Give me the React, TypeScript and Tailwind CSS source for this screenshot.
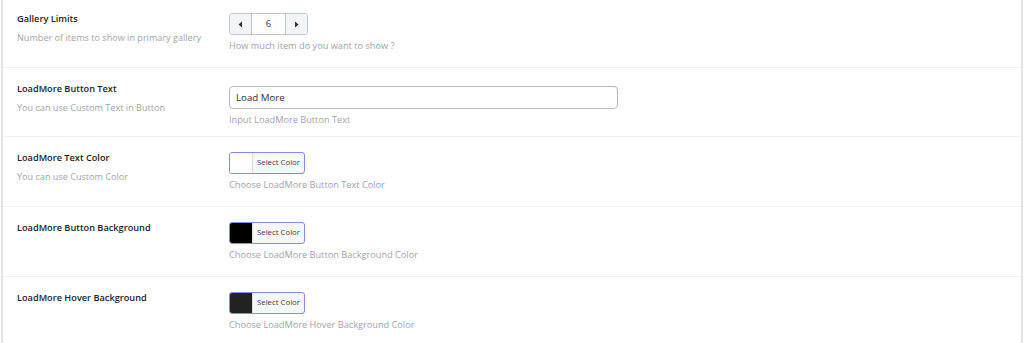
import React, { useState } from 'react';

interface SettingRowProps {
    label: string;
    description?: string;
    help: string;
    children: React.ReactNode;
    heightClass: string;
    first?: boolean;
    last?: boolean;
}

const SettingRow: React.FC<SettingRowProps> = ({ label, description, help, children, heightClass, first, last }) => {
    return (
        <div className={`flex ${heightClass} ${first ? 'pt-0' : 'pt-[2px]'} ${last ? '' : 'border-b border-[#f0f0f1]'}`}>
            <div className="w-[212px] shrink-0 pl-[14px] pt-[12px]">
                <div className="text-[9.2px] font-semibold leading-[14px] text-[#1d2327]">{label}</div>
                {description && (
                    <div className="mt-[5px] text-[9.1px] leading-[14px] text-[#a0a5aa]">{description}</div>
                )}
            </div>
            <div className="pl-[14px] pt-[13px]">
                {children}
                <div className="mt-[4px] text-[9.2px] leading-[14px] text-[#a0a5aa]">{help}</div>
            </div>
        </div>
    );
};

const ColorPicker: React.FC<{ color: string }> = ({ color }) => (
    <button
        type="button"
        className="flex h-[22px] w-[76px] items-stretch overflow-hidden rounded-[3px] border border-[#7f8cf5] bg-[#f6f7f7]"
    >
        <span className="w-[23px] border-r border-[#dcdcde]" style={{ backgroundColor: color }} />
        <span className="flex flex-1 items-center justify-center text-[7.8px] text-[#3c434a]">Select Color</span>
    </button>
);

const Stepper: React.FC = () => {
    const [value, setValue] = useState(6);
    return (
        <div className="flex h-[22px] w-[79px] overflow-hidden rounded-[3px] border border-[#c3c4c7] bg-white">
            <button
                type="button"
                onClick={() => setValue(v => Math.max(0, v - 1))}
                className="flex w-[22px] items-center justify-center border-r border-[#c3c4c7] bg-[#f3f4f5]"
            >
                <svg width="5" height="7" viewBox="0 0 5 7"><path d="M4 0.5 L0.5 3.5 L4 6.5 Z" fill="#2c3338" /></svg>
            </button>
            <div className="flex flex-1 items-center justify-center text-[9.5px] text-[#3c434a]">{value}</div>
            <button
                type="button"
                onClick={() => setValue(v => v + 1)}
                className="flex w-[22px] items-center justify-center border-l border-[#c3c4c7] bg-[#f3f4f5]"
            >
                <svg width="5" height="7" viewBox="0 0 5 7"><path d="M1 0.5 L4.5 3.5 L1 6.5 Z" fill="#2c3338" /></svg>
            </button>
        </div>
    );
};

export default function App() {
    const [buttonText, setButtonText] = useState('Load More');

    return (
        <div className="h-[343px] w-[1024px] overflow-hidden bg-white font-['Open_Sans',sans-serif]">
            <div className="mx-[1px] h-full border-x-2 border-[#e4e4e4]">
                <SettingRow
                    first
                    heightClass="h-[68px]"
                    label="Gallery Limits"
                    description="Number of items to show in primary gallery"
                    help="How much item do you want to show ?"
                >
                    <Stepper />
                </SettingRow>
                <SettingRow
                    heightClass="h-[69px]"
                    label="LoadMore Button Text"
                    description="You can use Custom Text in Button"
                    help="Input LoadMore Button Text"
                >
                    <input
                        type="text"
                        value={buttonText}
                        onChange={e => setButtonText(e.target.value)}
                        className="h-[23px] w-[389px] rounded-[4px] border border-[#b4b9be] px-[6px] text-[9.7px] text-[#2c3338] outline-none"
                    />
                </SettingRow>
                <SettingRow
                    heightClass="h-[70px]"
                    label="LoadMore Text Color"
                    description="You can use Custom Color"
                    help="Choose LoadMore Button Text Color"
                >
                    <ColorPicker color="#ffffff" />
                </SettingRow>
                <SettingRow
                    heightClass="h-[70px]"
                    label="LoadMore Button Background"
                    help="Choose LoadMore Button Background Color"
                >
                    <ColorPicker color="#000000" />
                </SettingRow>
                <SettingRow
                    heightClass="h-[66px]"
                    label="LoadMore Hover Background"
                    help="Choose LoadMore Hover Background Color"
                    last
                >
                    <ColorPicker color="#222222" />
                </SettingRow>
            </div>
        </div>
    );
}
